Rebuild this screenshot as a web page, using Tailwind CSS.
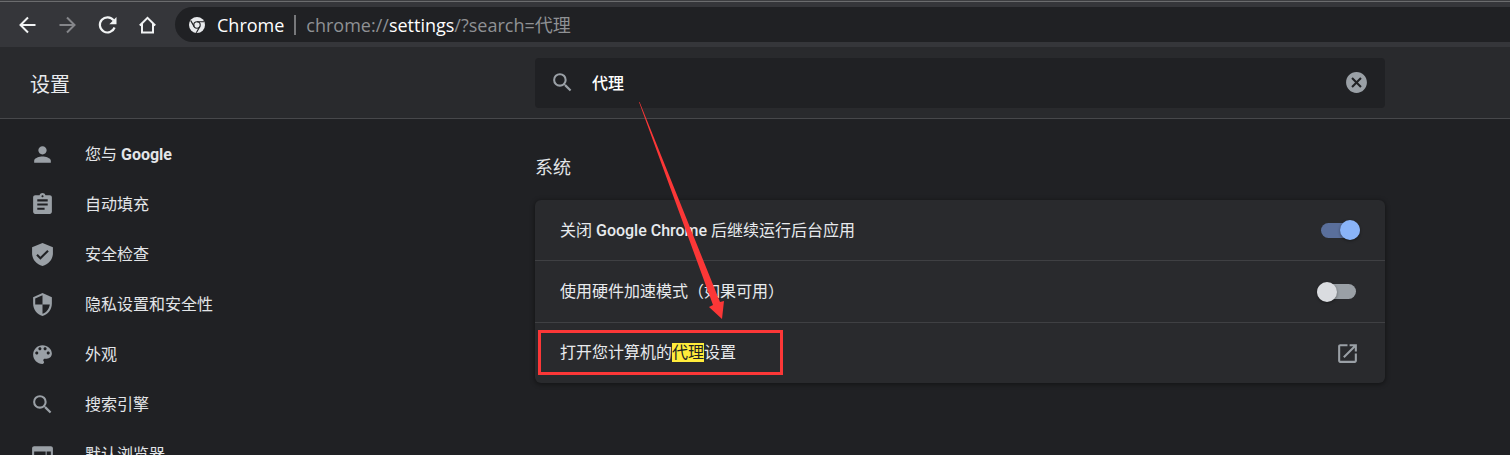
<!DOCTYPE html>
<html lang="zh-CN">
<head>
<meta charset="utf-8">
<meta name="viewport" content="width=device-width, initial-scale=1">
<title>设置</title>
<script src="https://cdn.jsdelivr.net/npm/@tailwindcss/browser@4"></script>
</head>
<body class="relative flex h-screen flex-col overflow-hidden bg-[#202124] font-['Roboto','Noto_Sans_CJK_SC',sans-serif] text-base text-[#e8eaed]">

  <!-- Browser toolbar -->
  <div class="shrink-0 border-t border-[#3c3d40] bg-[#35363a]">
    <div class="flex h-[46px] items-center border-t border-[#6b6c6e] pl-[15px]">
      <div class="flex w-40 shrink-0 items-center gap-4 text-[#f1f3f4]">
        <button type="button" aria-label="后退" class="size-6"><svg viewBox="0 0 24 24" class="size-6" fill="none" stroke="currentColor" stroke-width="2"><path d="M20.500 12H5.500M13 4.500L5.500 12L13 19.500"/></svg></button>
        <button type="button" aria-label="前进" class="size-6 text-[#85868a]"><svg viewBox="0 0 24 24" class="size-6" fill="none" stroke="currentColor" stroke-width="2"><path d="M4.500 12H19.500M12 4.500L19.500 12L12 19.500"/></svg></button>
        <button type="button" aria-label="重新加载" class="size-6"><svg viewBox="0 0 24 24" class="size-6"><path fill="none" stroke="currentColor" stroke-width="2.200" d="M18.600 7.400A7.600 7.600 0 1 0 19.600 14.500"/><path fill="currentColor" d="M21.500 4V11.200H14.300Z"/></svg></button>
        <button type="button" aria-label="主页" class="size-6"><svg viewBox="0 0 24 24" class="size-6" fill="none" stroke="currentColor" stroke-width="2"><path d="M4.800 12.500L12.500 4.800L20.200 12.500M7 10.800V19.500H18V10.800"/></svg></button>
      </div>
      <div class="flex h-[35px] min-w-0 flex-1 items-center rounded-l-full bg-[#202124] pl-3.5 font-['Open_Sans','Noto_Sans_CJK_SC',sans-serif] text-lg leading-6">
        <svg viewBox="0 0 24 24" class="size-4 shrink-0 text-[#e8eaed]" aria-hidden="true"><circle cx="12" cy="12" r="12" fill="currentColor"/><circle cx="12" cy="12" r="4.800" fill="none" stroke="#202124" stroke-width="1.700"/><path d="M12 7.200H22.500M7.800 14.400L2.600 5.400M16.200 14.400L11 23.500" stroke="#202124" stroke-width="1.700"/></svg>
        <span class="ml-3 text-white">Chrome</span>
        <span class="mx-2.5 h-5 w-0.5 bg-[#77787b]"></span>
        <span class="whitespace-nowrap text-[#8f9194]">chrome://<span class="text-white">settings</span>/?search=代理</span>
      </div>
    </div>
  </div>

  <!-- Settings header -->
  <header class="flex h-[72px] shrink-0 items-center border-b border-[#47484b] bg-[#292a2d]">
    <h1 class="w-[410px] shrink-0 pt-1 pl-[30px] text-xl">设置</h1>
    <div class="flex min-w-0 flex-1 justify-center">
      <div class="flex h-[50px] w-full max-w-[850px] items-center rounded bg-[#202124] pr-4 pl-[15px]">
        <svg viewBox="0 0 24 24" class="size-[25px] shrink-0 fill-[#9aa0a6]" aria-hidden="true"><path d="M15.500 14h-.790l-.280-.270A6.471 6.471 0 0 0 16 9.500 6.500 6.500 0 1 0 9.500 16c1.610 0 3.090-.590 4.230-1.570l.270.280v.790l5 4.990L20.490 19l-4.990-5zm-6 0C7.010 14 5 11.990 5 9.500S7.010 5 9.500 5 14 7.010 14 9.500 11.990 14 9.500 14z"/></svg>
        <input type="text" value="代理" aria-label="在设置中搜索" class="ml-[17px] min-w-0 flex-1 bg-transparent pt-0.5 font-medium text-white outline-none">
        <button type="button" aria-label="清除搜索内容" class="size-[25px]"><svg viewBox="0 0 24 24" class="size-[25px] fill-[#9aa0a6]"><path d="M12 2C6.470 2 2 6.470 2 12s4.470 10 10 10 10-4.470 10-10S17.530 2 12 2zm5 13.590L15.590 17 12 13.410 8.410 17 7 15.590 10.590 12 7 8.410 8.410 7 12 10.590 15.590 7 17 8.410 13.410 12 17 15.590z"/></svg></button>
      </div>
    </div>
  </header>

  <div class="flex min-h-0 flex-1">
    <!-- Section menu -->
    <nav class="w-[410px] shrink-0 pt-2.5 text-[#e3e5e8]">
      <a href="#people" class="flex h-[50px] items-center gap-[30px] pl-[30px]"><svg viewBox="0 0 24 24" class="size-[25px] fill-[#9aa0a6]"><path d="M12 12c2.210 0 4-1.790 4-4s-1.790-4-4-4-4 1.790-4 4 1.790 4 4 4zm0 2c-2.670 0-8 1.340-8 4v2h16v-2c0-2.660-5.330-4-8-4z"/></svg><span class="pt-0.5">您与 <span class="font-bold">Google</span></span></a>
      <a href="#autofill" class="flex h-[50px] items-center gap-[30px] pl-[30px]"><svg viewBox="0 0 24 24" class="size-[25px] fill-[#9aa0a6]"><path d="M19 3h-4.180C14.400 1.840 13.300 1 12 1c-1.300 0-2.400.840-2.820 2H5c-1.100 0-2 .900-2 2v14c0 1.100.900 2 2 2h14c1.100 0 2-.900 2-2V5c0-1.100-.900-2-2-2zm-7 0c.550 0 1 .450 1 1s-.450 1-1 1-1-.450-1-1 .450-1 1-1zm2 14H7v-2h7v2zm3-4H7v-2h10v2zm0-4H7V7h10v2z"/></svg><span class="pt-0.5">自动填充</span></a>
      <a href="#safety" class="flex h-[50px] items-center gap-[30px] pl-[30px]"><svg viewBox="0 0 24 24" class="size-[25px] fill-[#9aa0a6]"><path d="M12 1L2 5v6c0 5.550 4.270 10.740 10 12 5.730-1.260 10-6.450 10-12V5L12 1zm-2 16l-4-4 1.410-1.410L10 14.170l6.590-6.590L18 9l-8 8z"/></svg><span class="pt-0.5">安全检查</span></a>
      <a href="#privacy" class="flex h-[50px] items-center gap-[30px] pl-[30px]"><svg viewBox="0 0 24 24" class="size-[25px] fill-[#9aa0a6]"><path d="M12 1L3 5v6c0 5.550 3.840 10.740 9 12 5.160-1.260 9-6.450 9-12V5l-9-4zm0 10.990h7c-.530 4.120-3.280 7.790-7 8.940V12H5V6.300l7-3.110v8.800z"/></svg><span class="pt-0.5">隐私设置和安全性</span></a>
      <a href="#appearance" class="flex h-[50px] items-center gap-[30px] pl-[30px]"><svg viewBox="0 0 24 24" class="size-[25px] fill-[#9aa0a6]"><path d="M12 3c-4.970 0-9 4.030-9 9s4.030 9 9 9c.830 0 1.500-.670 1.500-1.500 0-.390-.150-.740-.390-1.010-.230-.260-.380-.610-.380-.990 0-.830.670-1.500 1.500-1.500H16c2.760 0 5-2.240 5-5 0-4.420-4.030-8-9-8zm-5.500 9c-.830 0-1.500-.670-1.500-1.500S5.670 9 6.500 9 8 9.670 8 10.500 7.330 12 6.500 12zm3-4C8.670 8 8 7.330 8 6.500S8.670 5 9.500 5s1.500.670 1.500 1.500S10.330 8 9.500 8zm5 0c-.830 0-1.500-.670-1.500-1.500S13.670 5 14.500 5s1.500.670 1.500 1.500S15.330 8 14.500 8zm3 4c-.830 0-1.500-.670-1.500-1.500S16.670 9 17.500 9s1.500.670 1.500 1.500-.670 1.500-1.500 1.500z"/></svg><span class="pt-0.5">外观</span></a>
      <a href="#search" class="flex h-[50px] items-center gap-[30px] pl-[30px]"><svg viewBox="0 0 24 24" class="size-[25px] fill-[#9aa0a6]"><path d="M15.500 14h-.790l-.280-.270A6.471 6.471 0 0 0 16 9.500 6.500 6.500 0 1 0 9.500 16c1.610 0 3.090-.590 4.230-1.570l.270.280v.790l5 4.990L20.490 19l-4.990-5zm-6 0C7.010 14 5 11.990 5 9.500S7.010 5 9.500 5 14 7.010 14 9.500 11.990 14 9.500 14z"/></svg><span class="pt-0.5">搜索引擎</span></a>
      <a href="#browser" class="flex h-[50px] items-center gap-[30px] pl-[30px]"><svg viewBox="0 0 24 24" class="size-[25px] fill-[#9aa0a6]"><path d="M20 4H4c-1.100 0-1.990.900-1.990 2L2 18c0 1.100.900 2 2 2h16c1.100 0 2-.900 2-2V6c0-1.100-.900-2-2-2zm-5 14H4v-4h11v4zm0-5H4V9h11v4zm5 5h-4V9h4v9z"/></svg><span class="pt-0.5">默认浏览器</span></a>
    </nav>

    <!-- Search results -->
    <main class="flex min-w-0 flex-1 justify-center">
      <section class="w-full max-w-[850px] pt-[35px]">
        <h2 class="text-lg leading-7 text-[#e3e5e8]">系统</h2>
        <div class="mt-[18px] rounded-md bg-[#292a2d] shadow-[0_1px_4px_1px_rgba(0,0,0,0.35)]">
          <div class="flex h-[61px] items-center justify-between border-b border-[#3f4043] pr-[25px] pl-[25px]">
            <label for="background" class="pt-0.5">关闭 <span class="font-medium">Google Chrome</span> 后继续运行后台应用</label>
            <span class="flex h-5 w-10 items-center justify-end">
              <input id="background" type="checkbox" checked class="flex h-[15px] w-[39px] appearance-none items-center justify-end rounded-full bg-[#5a6f9b] before:size-5 before:rounded-full before:bg-[#8ab4f8] before:shadow-[0_1px_3px_rgba(0,0,0,0.4)] before:content-['']">
            </span>
          </div>
          <div class="flex h-[62px] items-center justify-between border-b border-[#3f4043] pr-7 pl-[25px]">
            <label for="hardware">使用硬件加速模式（如果可用）</label>
            <span class="flex h-5 w-10 items-center">
              <input id="hardware" type="checkbox" class="flex h-[15px] w-[39px] appearance-none items-center rounded-full bg-[#9aa0a6] before:size-5 before:rounded-full before:bg-[#dadce0] before:shadow-[0_1px_3px_rgba(0,0,0,0.4)] before:content-['']">
            </span>
          </div>
          <a href="#proxy" class="flex h-[60px] items-center justify-between pr-[25px] pl-[25px]">
            <span>打开您计算机的<mark class="inline-block bg-[#ffeb3b] leading-[19px] text-[#202124]">代理</mark>设置</span>
            <svg viewBox="0 0 24 24" class="size-[25px] fill-[#9aa0a6]" aria-hidden="true"><path d="M19 19H5V5h7V3H5c-1.110 0-2 .900-2 2v14c0 1.100.890 2 2 2h14c1.100 0 2-.900 2-2v-7h-2v7zM14 3v2h3.590l-9.830 9.830 1.410 1.410L19 6.410V10h2V3h-7z"/></svg>
          </a>
        </div>
      </section>
    </main>
  </div>

  <!-- Annotation overlay: arrow and box around the proxy row -->
  <svg class="pointer-events-none absolute top-[102px] left-[538px] h-[274px] w-[246px]" viewBox="0 0 246 274" aria-hidden="true">
    <path fill="#fb3737" d="M101 0L101.600 0L182 200L186 199L184 217L171 205L175 203Z"/>
    <rect x="1.500" y="229.500" width="242" height="42" fill="none" stroke="#fb3737" stroke-width="3"/>
  </svg>
</body>
</html>
